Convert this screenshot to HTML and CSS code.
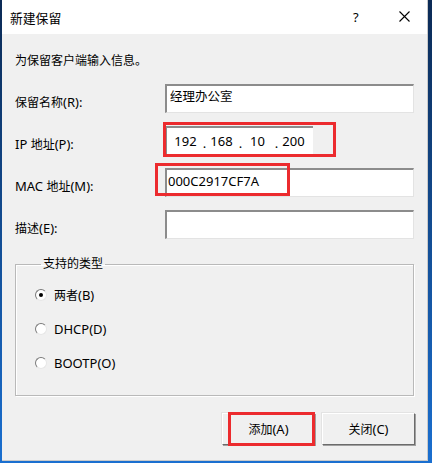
FILE: index.html
```html
<!DOCTYPE html>
<html lang="zh-CN">
<head>
<meta charset="utf-8">
<title>新建保留</title>
<link rel="stylesheet" href="styles.css">
</head>
<body>
<div class="desktop">
  <div class="window">
    <div class="titlebar">
      <span class="title">新建保留</span>
      <span class="help">?</span>
      <span class="close">
        <svg width="11" height="11" viewBox="0 0 11 11"><path d="M0.5 0.5 L10.5 10.5 M10.5 0.5 L0.5 10.5" stroke="#000" stroke-width="1.1" fill="none"/></svg>
      </span>
    </div>
    <div class="content">
      <p class="intro">为保留客户端输入信息。</p>
      <div class="form">
        <label class="label">保留名称<span class="lt">(R):</span></label>
        <div class="field"><div class="input">经理办公室</div></div>

        <label class="label"><span class="lt">IP </span>地址<span class="lt">(P):</span></label>
        <div class="field marked">
          <div class="ipbox">
            <div class="ip"><span class="oct">192</span><span class="dot">.</span><span class="oct">168</span><span class="dot">.</span><span class="oct">10</span><span class="dot">.</span><span class="oct">200</span></div>
          </div>
          <span class="redbox ip-red"></span>
        </div>

        <label class="label"><span class="lt">MAC </span>地址<span class="lt">(M):</span></label>
        <div class="field marked">
          <div class="input lt">000C2917CF7A</div>
          <span class="redbox mac-red"></span>
        </div>

        <label class="label">描述<span class="lt">(E):</span></label>
        <div class="field"><div class="input"></div></div>
      </div>

      <fieldset class="group">
        <legend class="legend">支持的类型</legend>
        <div class="radio"><span class="circle checked"></span><span>两者<span class="lt">(B)</span></span></div>
        <div class="radio"><span class="circle"></span><span class="lt">DHCP(D)</span></div>
        <div class="radio"><span class="circle"></span><span class="lt">BOOTP(O)</span></div>
      </fieldset>

      <div class="buttons">
        <div class="btn marked"><span>添加<span class="lt">(A)</span></span><span class="redbox btn-red"></span></div>
        <div class="btn"><span>关闭<span class="lt">(C)</span></span></div>
      </div>
    </div>
  </div>
</div>
</body>
</html>
```
FILE: styles.css
```css
* { box-sizing: border-box; }
html, body { margin: 0; padding: 0; }
body {
  font-family: "Noto Sans", "Noto Sans CJK SC", sans-serif;
  font-size: 12px;
  color: #000;
  background: #2a2a2a;
}
.lt { font-size: 13px; }
.desktop {
  width: 432px;
  height: 463px;
  background: linear-gradient(#0b2a55, #1a6fd0);
  padding-left: 2px;
  padding-right: 4px;
  padding-bottom: 2px;
  display: flex;
  flex-direction: column;
}
.window {
  flex: 1;
  background: #f0f0f0;
  border-right: 1px solid #c9c9c9;
  border-bottom: 1px solid #c9c9c9;
  display: flex;
  flex-direction: column;
}
.titlebar {
  height: 34px;
  background: #fff;
  display: flex;
  align-items: center;
  padding-left: 8px;
}
.title {
  font-size: 12.8px;
  flex: 1;
  padding-top: 1px;
}
.help {
  font-size: 13px;
  width: 10px;
  margin-right: 36px;
}
.close {
  display: flex;
  margin-right: 17px;
  margin-top: -1px;
}
.content {
  padding: 0 12px 0 13px;
  display: flex;
  flex-direction: column;
}
.intro {
  margin: 18px 0 0 0;
  line-height: 17px;
}
.form {
  margin-top: 15px;
  display: grid;
  grid-template-columns: 150px 249px;
  grid-auto-rows: 42px;
  align-items: start;
}
.label {
  line-height: 29px;
  padding-top: 4px;
}
.field { position: relative; }
.input {
  height: 29px;
  background: #fff;
  border-top: 2px solid #8c8c8c;
  border-left: 2px solid #8c8c8c;
  border-right: 1px solid #e3e3e3;
  border-bottom: 1px solid #e3e3e3;
  padding-left: 3px;
  line-height: 22px;
  font-size: 12.5px;
}
.input.lt { font-size: 13px; padding-left: 1px; }
.ipbox {
  width: 165px;
  height: 28px;
  display: flex;
}
.ip {
  width: 148px;
  height: 28px;
  background: #fff;
  border-top: 2px solid #8c8c8c;
  border-left: 2px solid #8c8c8c;
  display: flex;
  align-items: center;
  padding-left: 5px;
  font-size: 13px;
}
.oct { display: inline-block; width: 27px; text-align: center; }
.dot { display: inline-block; width: 9px; text-align: center; padding-top: 3px; padding-left: 2px; }
.redbox {
  position: absolute;
  border: 3px solid #ec2b2e;
  pointer-events: none;
}
.ip-red { left: -2px; top: -4px; width: 173px; height: 35px; }
.mac-red { left: -10px; top: -5px; width: 135px; height: 33px; }
.group {
  margin: 4px 0 0 0;
  padding: 6px 0 15px 19px;
  border: 1px solid #b9b9b9;
  box-shadow: inset 1px 1px 0 #fff, 1px 1px 0 #fff;
  min-width: 0;
  width: 399px;
  height: 140px;
}
.legend {
  margin-left: 6px;
  padding: 0 2px;
  line-height: 16px;
}
.radio {
  display: flex;
  align-items: center;
  height: 34px;
}
.circle {
  width: 12px;
  height: 12px;
  border-radius: 50%;
  background: #fff;
  border: 1px solid;
  border-color: #7a7a7a #e6e6e6 #e6e6e6 #7a7a7a;
  margin-right: 7px;
  position: relative;
  flex: none;
}
.circle.checked::after {
  content: "";
  position: absolute;
  left: 3px;
  top: 3px;
  width: 4px;
  height: 4px;
  border-radius: 50%;
  background: #000;
}
.buttons {
  margin-top: 17px;
  display: flex;
  justify-content: flex-end;
  gap: 7px;
}
.btn {
  position: relative;
  width: 93px;
  height: 32px;
  background: #f0f0f0;
  border: 1px solid;
  border-color: #fff #6b6b6b #6b6b6b #fff;
  box-shadow: 1px 1px 0 #a0a0a0, -1px -1px 0 #e3e3e3;
  display: flex;
  align-items: center;
  justify-content: center;
}
.btn-red { left: 5px; top: -2px; width: 87px; height: 34px; }
```
